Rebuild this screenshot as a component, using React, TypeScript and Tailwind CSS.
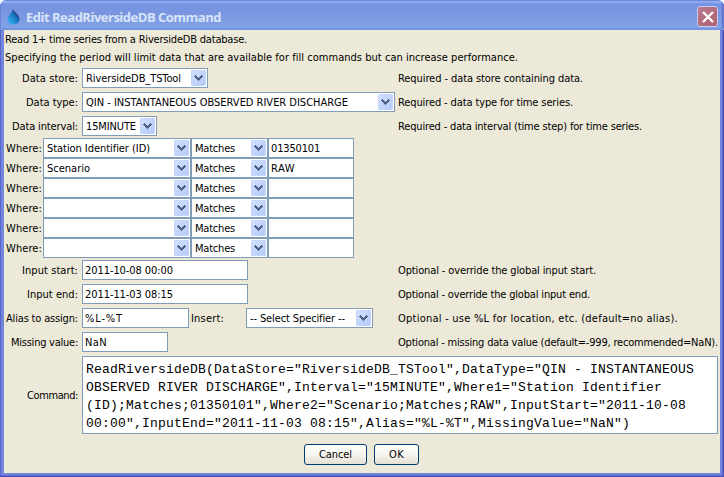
import { useLayoutEffect, useRef } from 'react';
import type { ReactNode } from 'react';

/* A single line of text whose letter spacing is computed so that it fills the given width. */
function Fit({ w, children, className = 'pt-0.5' }: { w: number; children: string; className?: string }) {
  const ref = useRef<HTMLSpanElement>(null);
  useLayoutEffect(() => {
    const el = ref.current;
    if (!el || !children) return;
    el.style.letterSpacing = '0px';
    const natural = el.getBoundingClientRect().width;
    el.style.letterSpacing = `${(w - natural) / children.length}px`;
  }, [w, children]);
  return (
    <span ref={ref} className={`inline-block self-center whitespace-pre ${className}`}>
      {children}
    </span>
  );
}

function Combo({ text, tw, className }: { text: string; tw: number; className: string }) {
  return (
    <div className={`flex h-5 shrink-0 items-center border border-[#7f9db9] bg-white p-px pl-[3px] ${className}`}>
      {text && <Fit w={tw}>{text}</Fit>}
      <span className="ml-auto flex h-4 w-[15px] shrink-0 items-center justify-center rounded-[1px] border border-[#c5d4fb] bg-linear-to-br from-[#d3e0ff] to-[#b3caf9]">
        <svg width="9" height="6" viewBox="0 0 9 6" shapeRendering="crispEdges" fill="#4d6185">
          <path d="M1 0h1v1h1v1h1v1h1v-1h1v-1h1v-1h1v1h1v1h-1v1h-1v1h-1v1h-1v1h-1v-1h-1v-1h-1v-1h-1v-1h-1v-1h1z" />
        </svg>
      </span>
    </div>
  );
}

function Field({ text, tw, className }: { text: string; tw: number; className: string }) {
  return (
    <div className={`flex h-5 shrink-0 items-center border border-[#7f9db9] bg-white pl-0.5 ${className}`}>
      {text && <Fit w={tw}>{text}</Fit>}
    </div>
  );
}

function Row({ label, lw, children, note, nw }: { label: string; lw: number; children: ReactNode; note: string; nw: number }) {
  return (
    <div className="flex h-5 items-center">
      <div className="mr-1 flex w-[74px] shrink-0 justify-end">
        <Fit w={lw}>{label}</Fit>
      </div>
      <div className="flex w-[316px] shrink-0 items-center">{children}</div>
      <Fit w={nw}>{note}</Fit>
    </div>
  );
}

const wheres = [
  { field: 'Station Identifier (ID)', fw: 103, value: '01350101', vw: 49 },
  { field: 'Scenario', fw: 43, value: 'RAW', vw: 24 },
  { field: '', fw: 0, value: '', vw: 0 },
  { field: '', fw: 0, value: '', vw: 0 },
  { field: '', fw: 0, value: '', vw: 0 },
  { field: '', fw: 0, value: '', vw: 0 },
];

export default function App() {
  return (
    <div className="h-[477px] w-[724px] bg-white font-['DejaVu_Sans_Condensed','DejaVu_Sans',sans-serif] text-[11px] leading-[14px] text-black [font-stretch:condensed]">
      <div className="flex h-full flex-col overflow-hidden rounded-t-[7px] bg-[#7485dc] px-1 pb-1 shadow-[inset_1px_0_#5564cf,inset_-1px_-1px_#4a4fb8,inset_-2px_-2px_#5d6bd0]">
        <header className="-mx-1 flex h-[30px] shrink-0 items-center bg-linear-to-b from-[#7290e2] via-[#7b97e0] to-[#82a5e9] pl-[7px] pr-[6px] pt-[3px] shadow-[inset_0_1px_#6f86dc,inset_0_3px_2px_#92b0ee,inset_0_-2px_1px_#7593e0,inset_1px_0_#5b70d5,inset_-2px_0_1px_#5a68cc]">
          <svg width="13" height="16" viewBox="0 0 13 16">
            <defs>
              <linearGradient id="drop" x1="0" y1="1" x2="1" y2="0">
                <stop offset="0.2" stopColor="#35a5ea" />
                <stop offset="0.55" stopColor="#1878c4" />
                <stop offset="0.85" stopColor="#1b2060" />
              </linearGradient>
            </defs>
            <path d="M5.5 0C7.5 3 12.5 6 12.5 10.2C12.5 13.5 9.5 15.5 6.3 15.5C3 15.5 .5 13.2 .5 10C.5 6.5 5.5 4.5 5.5 0Z" fill="url(#drop)" />
          </svg>
          <Fit w={195} className="ml-[6px] font-['Open_Sans','Noto_Sans',sans-serif] text-[13px] font-bold leading-4 text-[#d8e4f8] [font-stretch:normal]">
            Edit ReadRiversideDB Command
          </Fit>
          <span className="ml-auto flex h-[21px] w-[21px] items-center justify-center rounded-[3px] border border-[#c5cdf0] bg-linear-to-br from-[#b9788f] to-[#b0606f]">
            <svg width="12" height="12" viewBox="0 0 12 12" stroke="#fff" strokeWidth="2.4">
              <path d="M1 1L11 11M11 1L1 11" />
            </svg>
          </span>
        </header>

        <main className="flex h-[443px] flex-col bg-[#ece9d8]">
          <div className="flex h-[38px] flex-col pl-[1px] pt-px leading-[18px]">
            <div className="flex h-[18px]">
              <Fit w={242} className="">Read 1+ time series from a RiversideDB database.</Fit>
            </div>
            <div className="flex h-[18px]">
              <Fit w={513} className="">Specifying the period will limit data that are available for fill commands but can increase performance.</Fit>
            </div>
          </div>

          <div className="flex flex-col gap-1">
            <Row label="Data store:" lw={56} note="Required - data store containing data." nw={185}>
              <Combo text="RiversideDB_TSTool" tw={95} className="w-[126px]" />
            </Row>
            <Row label="Data type:" lw={52} note="Required - data type for time series." nw={175}>
              <Combo text="QIN - INSTANTANEOUS OBSERVED RIVER DISCHARGE" tw={262} className="w-[313px]" />
            </Row>
            <Row label="Data interval:" lw={66} note="Required - data interval (time step) for time series." nw={244}>
              <Combo text="15MINUTE" tw={50} className="w-[75px]" />
            </Row>
          </div>

          <div className="mt-0.5 flex flex-col">
            {wheres.map((r, i) => (
              <div key={i} className="flex h-5 items-center pl-0.5">
                <div className="flex w-[37px] shrink-0">
                  <Fit w={36}>Where:</Fit>
                </div>
                <Combo text={r.field} tw={r.fw} className="w-[148px]" />
                <Combo text="Matches" tw={40} className="w-[77px]" />
                <Field text={r.value} tw={r.vw} className="w-[86px]" />
              </div>
            ))}
          </div>

          <div className="mt-0.5 flex flex-col gap-1">
            <Row label="Input start:" lw={56} note="Optional - override the global input start." nw={198}>
              <Field text="2011-10-08 00:00" tw={88} className="w-[166px]" />
            </Row>
            <Row label="Input end:" lw={51} note="Optional - override the global input end." nw={192}>
              <Field text="2011-11-03 08:15" tw={88} className="w-[166px]" />
            </Row>
            <Row label="Alias to assign:" lw={72} note="Optional - use %L for location, etc. (default=no alias)." nw={280}>
              <Field text="%L-%T" tw={38} className="w-[107px]" />
              <div className="flex w-[57px] shrink-0 pl-0.5">
                <Fit w={33}>Insert:</Fit>
              </div>
              <Combo text="-- Select Specifier --" tw={95} className="w-[127px]" />
            </Row>
            <Row label="Missing value:" lw={67} note="Optional - missing data value (default=-999, recommended=NaN)." nw={320}>
              <Field text="NaN" tw={22} className="w-[86px]" />
            </Row>
          </div>

          <div className="mt-1 flex h-[78px] items-center">
            <div className="mr-1 flex w-[74px] shrink-0 justify-end">
              <Fit w={51}>Command:</Fit>
            </div>
            <div className="h-[78px] w-[636px] whitespace-pre border border-[#7f9db9] bg-white pl-[3px] pt-1 font-['Liberation_Mono',monospace] text-[13px] leading-[18px] tracking-[0.2px] [font-stretch:normal]">
              {`ReadRiversideDB(DataStore="RiversideDB_TSTool",DataType="QIN - INSTANTANEOUS
OBSERVED RIVER DISCHARGE",Interval="15MINUTE",Where1="Station Identifier
(ID);Matches;01350101",Where2="Scenario;Matches;RAW",InputStart="2011-10-08
00:00",InputEnd="2011-11-03 08:15",Alias="%L-%T",MissingValue="NaN")`}
            </div>
          </div>

          <div className="mt-2.5 flex gap-[7px] pl-[300px]">
            <button className="flex h-[21px] w-[63px] items-center justify-center rounded-[3px] border border-[#003c74] bg-linear-to-b from-white via-[#f6f5f0] to-[#e3dfd2]">
              <Fit w={33} className="">Cancel</Fit>
            </button>
            <button className="flex h-[21px] w-[45px] items-center justify-center rounded-[3px] border border-[#003c74] bg-linear-to-b from-white via-[#f6f5f0] to-[#e3dfd2]">
              <Fit w={15} className="">OK</Fit>
            </button>
          </div>
        </main>
      </div>
    </div>
  );
}
